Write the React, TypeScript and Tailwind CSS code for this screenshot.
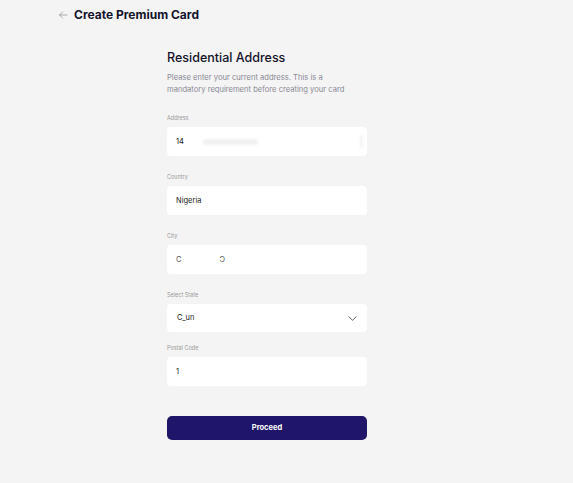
import React from "react";

const font = { fontFamily: "Inter, 'Noto Sans', sans-serif" };

function Label({ children, className = "" }: { children: React.ReactNode; className?: string }) {
  return <div className={`text-[5.5px] leading-[8px] text-[#9a9a9a] ${className}`}>{children}</div>;
}

export default function App() {
  return (
    <div className="min-h-[483px] w-[573px] bg-[#f4f4f4] text-[#14142b]" style={font}>
      <div className="flex items-center pl-[58px] pt-[8px] h-[22px]">
        <svg width="10" height="8" viewBox="0 0 10 8" fill="none" className="mr-[6px]">
          <path d="M9 4H1.5M4.5 1L1.5 4L4.5 7" stroke="#a8a8a8" strokeWidth="1" strokeLinecap="round" strokeLinejoin="round" />
        </svg>
        <span className="text-[12px] font-bold leading-none text-[#15132b]">Create Premium Card</span>
      </div>
      <div className="ml-[167px] w-[200px] pt-[28px]">
        <div className="text-[12.5px] font-medium leading-[16px] text-[#15132b]">Residential Address</div>
        <div className="mt-[6px] text-[7.6px] leading-[12px] text-[#8a8a94]">
          Please enter your current address. This is a
          <br />
          mandatory requirement before creating your card
        </div>
        <Label className="mt-[18px]">Address</Label>
        <div className="mt-[5px] flex h-[29px] items-center rounded-[4px] bg-white pl-[9px] text-[7.5px] text-[#222]">
          <span>14</span>
          <span className="ml-[19px] h-[6px] w-[55px] rounded-sm bg-[#f1f1f3] blur-[1px]"></span>
          <span className="ml-auto mr-[4px] h-[14px] w-[3px] rounded-sm bg-[#f4f4f4] blur-[1px]"></span>
        </div>
        <Label className="mt-[17px]">Country</Label>
        <div className="mt-[5px] flex h-[29px] items-center rounded-[4px] bg-white pl-[9px] text-[7.5px] text-[#222]">
          Nigeria
        </div>
        <Label className="mt-[17px]">City</Label>
        <div className="mt-[5px] flex h-[29px] items-center rounded-[4px] bg-white pl-[9px] text-[7.5px] text-[#555]">
          <span>C</span>
          <span className="ml-[38px]">Ɔ</span>
        </div>
        <Label className="mt-[17px]">Select State</Label>
        <div className="mt-[5px] flex h-[28px] items-center rounded-[4px] bg-white pl-[10px] pr-[10px] text-[7.5px] text-[#222]">
          <span>C_un</span>
          <svg width="9" height="5" viewBox="0 0 9 5" fill="none" className="ml-auto">
            <path d="M0.75 0.75L4.5 4.25L8.25 0.75" stroke="#555" strokeWidth="0.9" strokeLinecap="round" strokeLinejoin="round" />
          </svg>
        </div>
        <Label className="mt-[12px]">Postal Code</Label>
        <div className="mt-[5px] flex h-[29px] items-center rounded-[4px] bg-white pl-[9px] text-[7.5px] text-[#222]">
          1
        </div>
        <button className="mt-[30px] flex h-[24px] w-full items-center justify-center rounded-[5px] bg-[#1f1569] text-[7.5px] font-bold text-white">
          Proceed
        </button>
      </div>
    </div>
  );
}
